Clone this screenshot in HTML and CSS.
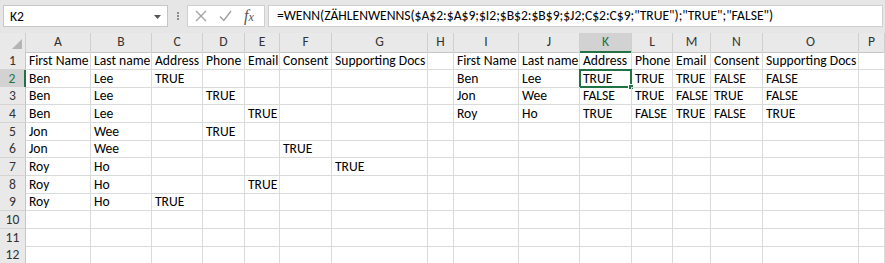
FILE: index.html
```html
<!DOCTYPE html>
<html>
<head>
<meta charset="utf-8">
<link rel="stylesheet" href="styles.css">
</head>
<body>
<div class="fbar">
  <div class="namebox"><span class="nb-text">K2</span><svg class="nb-arrow" width="7" height="4" viewBox="0 0 7 4"><path d="M0 0h7L3.5 4z" fill="#555"/></svg></div>
  <div class="grip"><span></span><span></span><span></span></div>
  <div class="fxbox">
    <svg class="ic" width="12" height="12" viewBox="0 0 12 12"><path d="M1 1l10 10M11 1L1 11" stroke="#a0a0a0" stroke-width="1.3" fill="none"/></svg>
    <svg class="ic" width="13" height="12" viewBox="0 0 13 12"><path d="M1 6.5l3.8 4L12 1" stroke="#a0a0a0" stroke-width="1.4" fill="none"/></svg>
    <span class="fx"><span class="fx-f">f</span><span class="fx-x">x</span></span>
  </div>
  <div class="formula">=WENN(ZÄHLENWENNS($A$2:$A$9;$I2;$B$2:$B$9;$J2;C$2:C$9;"TRUE");"TRUE";"FALSE")</div>
</div>
<div class="sheet">
  <div class="r hdr">
    <div class="corner"><svg width="10" height="10" viewBox="0 0 10 10"><path d="M10 0V10H0z" fill="#b4b4b4"/></svg></div>
    <div>A</div><div>B</div><div>C</div><div>D</div><div>E</div><div>F</div><div>G</div><div>H</div><div>I</div><div>J</div><div class="sel">K</div><div>L</div><div>M</div><div>N</div><div>O</div><div>P</div>
  </div>
  <div class="r"><div class="rh">1</div><div>First Name</div><div>Last name</div><div>Address</div><div>Phone</div><div>Email</div><div>Consent</div><div>Supporting Docs</div><div></div><div>First Name</div><div>Last name</div><div>Address</div><div>Phone</div><div>Email</div><div>Consent</div><div>Supporting Docs</div><div></div></div>
  <div class="r"><div class="rh sel">2</div><div>Ben</div><div>Lee</div><div>TRUE</div><div></div><div></div><div></div><div></div><div></div><div>Ben</div><div>Lee</div><div class="active">TRUE<span class="selbox"><span class="handle"></span></span></div><div>TRUE</div><div>TRUE</div><div>FALSE</div><div>FALSE</div><div></div></div>
  <div class="r"><div class="rh">3</div><div>Ben</div><div>Lee</div><div></div><div>TRUE</div><div></div><div></div><div></div><div></div><div>Jon</div><div>Wee</div><div>FALSE</div><div>TRUE</div><div>FALSE</div><div>TRUE</div><div>FALSE</div><div></div></div>
  <div class="r"><div class="rh">4</div><div>Ben</div><div>Lee</div><div></div><div></div><div>TRUE</div><div></div><div></div><div></div><div>Roy</div><div>Ho</div><div>TRUE</div><div>FALSE</div><div>TRUE</div><div>FALSE</div><div>TRUE</div><div></div></div>
  <div class="r"><div class="rh">5</div><div>Jon</div><div>Wee</div><div></div><div>TRUE</div><div></div><div></div><div></div><div></div><div></div><div></div><div></div><div></div><div></div><div></div><div></div><div></div></div>
  <div class="r"><div class="rh">6</div><div>Jon</div><div>Wee</div><div></div><div></div><div></div><div>TRUE</div><div></div><div></div><div></div><div></div><div></div><div></div><div></div><div></div><div></div><div></div></div>
  <div class="r"><div class="rh">7</div><div>Roy</div><div>Ho</div><div></div><div></div><div></div><div></div><div>TRUE</div><div></div><div></div><div></div><div></div><div></div><div></div><div></div><div></div><div></div></div>
  <div class="r"><div class="rh">8</div><div>Roy</div><div>Ho</div><div></div><div></div><div>TRUE</div><div></div><div></div><div></div><div></div><div></div><div></div><div></div><div></div><div></div><div></div><div></div></div>
  <div class="r"><div class="rh">9</div><div>Roy</div><div>Ho</div><div>TRUE</div><div></div><div></div><div></div><div></div><div></div><div></div><div></div><div></div><div></div><div></div><div></div><div></div><div></div></div>
  <div class="r"><div class="rh">10</div><div></div><div></div><div></div><div></div><div></div><div></div><div></div><div></div><div></div><div></div><div></div><div></div><div></div><div></div><div></div><div></div></div>
  <div class="r"><div class="rh">11</div><div></div><div></div><div></div><div></div><div></div><div></div><div></div><div></div><div></div><div></div><div></div><div></div><div></div><div></div><div></div><div></div></div>
  <div class="r"><div class="rh">12</div><div></div><div></div><div></div><div></div><div></div><div></div><div></div><div></div><div></div><div></div><div></div><div></div><div></div><div></div><div></div><div></div></div>
</div>
</body>
</html>
```

FILE: styles.css
```css
* { box-sizing: border-box; }
html, body { margin: 0; padding: 0; background: #fff; overflow: hidden; }
body {
  width: 885px; height: 263px;
  font-family: Carlito, Calibri, Lato, sans-serif;
  font-size: 13.6px; color: #000;
}
.fbar {
  height: 33px; background: #e6e6e6;
  display: flex; align-items: flex-start;
  padding: 5px 2px 0 3px;
}
.namebox {
  width: 165px; height: 22px; background: #fff;
  border: 1px solid #c6c6c6;
  display: flex; align-items: center; justify-content: space-between;
  padding: 0 6px 0 6px;
}
.nb-arrow { margin-top: 1px; }
.grip {
  width: 19px; height: 22px;
  display: flex; flex-direction: column; align-items: center; justify-content: center; gap: 1px;
}
.grip span { width: 2px; height: 2px; background: #8c8c8c; }
.fxbox {
  width: 78px; height: 22px; background: #fff; border: 1px solid #d0d0d0;
  display: flex; align-items: center; padding-left: 7px; gap: 12px;
}
.fx { font-family: "Liberation Serif", serif; font-style: italic; font-size: 15px; color: #555; line-height: 1; }
.fx-f { font-size: 16px; }
.fx-x { font-size: 12px; }
.formula {
  flex: 1; height: 22px; margin-left: 3px; background: #fff; border: 1px solid #d0d0d0;
  padding-left: 8px; line-height: 20px; white-space: nowrap; overflow: hidden;
}
.sheet { display: flex; flex-direction: column; }
.r {
  display: grid;
  grid-template-columns: 26px 65px 61px 51px 42px 35px 52px 96px 26px 65px 61px 52px 41px 38px 52px 96px 1fr;
  height: 17.66px;
}
.r > div {
  border-right: 1px solid #dadada; border-bottom: 1px solid #dadada;
  padding: 0 3px; line-height: 17px; white-space: nowrap; position: relative;
}
.r.hdr { height: 19px; }
.r.hdr > div {
  background: #e9e9e9; color: #333; text-align: center;
  border-right: 1px solid #cfcfcf; border-bottom: 1px solid #c6c6c6; line-height: 18px;
}
.r.hdr > div.sel { background: #d2d2d2; color: #217346; border-bottom: 2px solid #217346; }
.r.hdr .corner { display: flex; align-items: flex-end; justify-content: flex-end; padding: 0 3px 3px 0; }
.r > div.rh {
  background: #e9e9e9; color: #333; text-align: center; padding: 0;
  border-right: 1px solid #c6c6c6; border-bottom: 1px solid #d4d4d4;
}
.r > div.rh.sel { background: #d2d2d2; color: #217346; border-right: 2px solid #217346; }
.selbox {
  position: absolute; left: -1px; top: -1px; right: -1px; bottom: -1px;
  border: 2px solid #217346;
}
.handle {
  position: absolute; right: -4px; bottom: -4px; width: 6px; height: 6px;
  background: #217346; border: 1px solid #fff;
}
```
